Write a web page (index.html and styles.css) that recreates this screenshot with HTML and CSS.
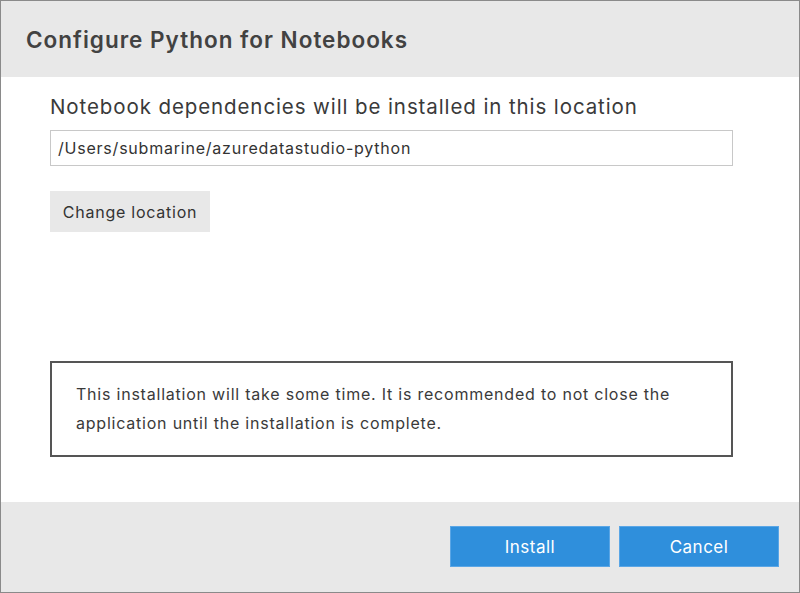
FILE: index.html
```html
<!DOCTYPE html>
<html>
<head>
<meta charset="utf-8">
<link rel="stylesheet" href="styles.css">
</head>
<body>
<div class="dialog">
  <div class="header">
    <h1 class="title">Configure Python for Notebooks</h1>
  </div>
  <div class="content">
    <div class="label">Notebook dependencies will be installed in this location</div>
    <div class="input">/Users/submarine/azuredatastudio-python</div>
    <button class="btn-secondary">Change location</button>
    <div class="spacer"></div>
    <div class="notice">This installation will take some time. It is recommended to not close the application until the installation is complete.</div>
  </div>
  <div class="footer">
    <button class="btn-primary">Install</button>
    <button class="btn-primary">Cancel</button>
  </div>
</div>
</body>
</html>
```
FILE: styles.css
```css
html, body {
  margin: 0;
  padding: 0;
  background: #ffffff;
}
.dialog {
  width: 800px;
  height: 593px;
  box-sizing: border-box;
  border: 1px solid #8a8a8a;
  display: flex;
  flex-direction: column;
  font-family: Inter, "Open Sans", sans-serif;
  color: #333333;
}
.header {
  height: 76px;
  background: #e8e8e8;
  display: flex;
  align-items: center;
  padding-left: 25px;
  flex: none;
}
.title {
  margin: 0;
  font-size: 22.5px;
  font-weight: 600;
  color: #424242;
  letter-spacing: 1px;
}
.content {
  flex: 1;
  display: flex;
  flex-direction: column;
  align-items: flex-start;
  padding: 16px 66px 45px 49px;
}
.label {
  font-size: 20.5px;
  line-height: 28px;
  letter-spacing: 0.9px;
  color: #3a3a3a;
}
.input {
  margin-top: 9px;
  align-self: stretch;
  height: 36px;
  box-sizing: border-box;
  border: 1px solid #c8c8c8;
  padding: 0 7px;
  display: flex;
  align-items: center;
  font-size: 16px;
  letter-spacing: 0.78px;
  color: #333;
}
.btn-secondary {
  margin-top: 25px;
  width: 160px;
  height: 41px;
  border: none;
  background: #e8e8e8;
  font-family: inherit;
  font-size: 16px;
  letter-spacing: 0.75px;
  color: #333;
  padding: 0;
}
.spacer {
  flex: 1;
}
.notice {
  align-self: stretch;
  box-sizing: border-box;
  height: 96px;
  border: 2px solid #555555;
  padding: 17px 24px;
  font-size: 16px;
  letter-spacing: 0.78px;
  line-height: 29px;
  color: #3a3a3a;
}
.footer {
  height: 90px;
  background: #e8e8e8;
  display: flex;
  justify-content: flex-end;
  align-items: flex-start;
  padding: 24px 20px 0 0;
  gap: 9px;
  flex: none;
  box-sizing: border-box;
}
.btn-primary {
  width: 160px;
  height: 41px;
  background: #2f8fdc;
  border: 1px solid #5aa6e6;
  color: #ffffff;
  font-family: inherit;
  font-size: 17px;
  letter-spacing: 0.5px;
  padding: 0;
}
```
